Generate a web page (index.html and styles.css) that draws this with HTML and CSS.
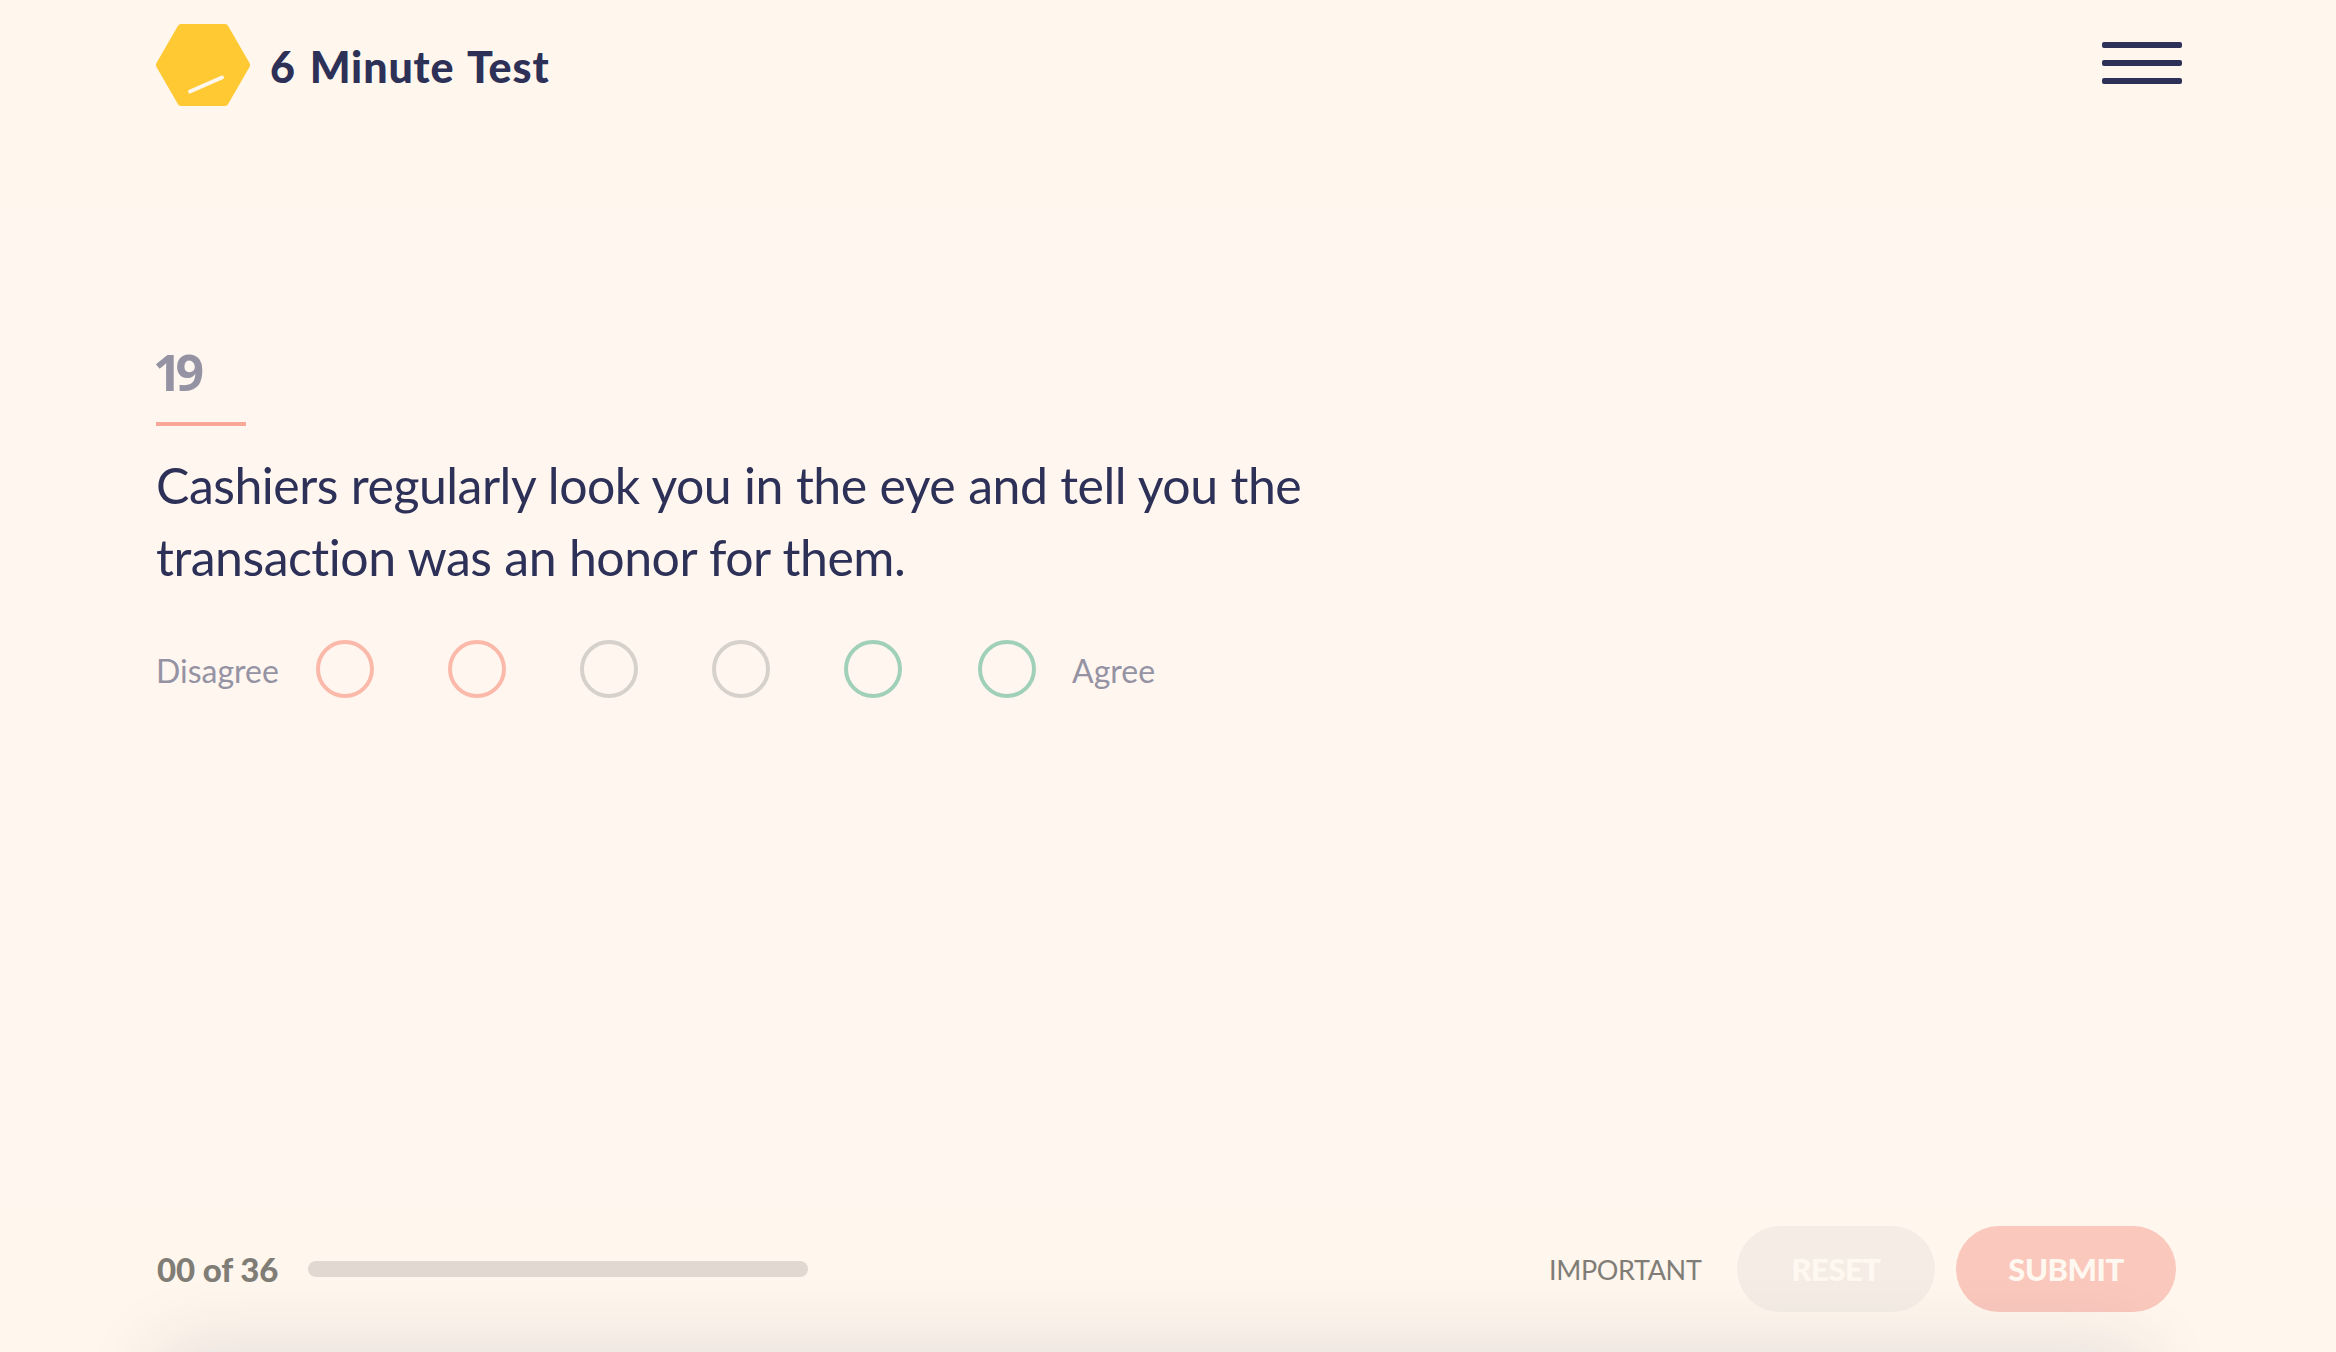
FILE: index.html
```html
<!DOCTYPE html>
<html lang="en">
<head>
  <meta charset="UTF-8">
  <meta name="viewport" content="width=device-width, initial-scale=1.0">
  <title>6 Minute Test</title>
  <link rel="stylesheet" href="styles.css">
</head>
<body>
  <div class="page">
    <header class="header">
      <a class="brand">
        <svg class="logo" viewBox="0 0 94 82" width="94" height="82">
          <path d="M25 0H69Q71 0 72 1.7L93.5 39Q94.5 41 93.5 43L72 80.300Q71 82 69 82H25Q23 82 22 80.300L.5 43Q-.5 41 .5 39L22 1.700Q23 0 25 0Z" fill="#ffc933"/>
          <path d="M34 67.500L66 53.500" stroke="#fff6ed" stroke-width="4" stroke-linecap="round"/>
        </svg>
        <span class="brand-name">6 Minute Test</span>
      </a>
      <div class="menu"><i></i><i></i><i></i></div>
    </header>
    <main class="question">
      <div class="number">19</div>
      <div class="text">Cashiers regularly look you in the eye and tell you the<br>transaction was an honor for them.</div>
      <div class="scale">
        <span class="label disagree">Disagree</span>
        <div class="options">
          <i class="option red"></i>
          <i class="option red"></i>
          <i class="option gray"></i>
          <i class="option gray"></i>
          <i class="option green"></i>
          <i class="option green last"></i>
        </div>
        <span class="label agree">Agree</span>
      </div>
    </main>
    <footer class="footer">
      <span class="count">00 of 36</span>
      <div class="progress"></div>
      <span class="important">IMPORTANT</span>
      <button class="btn reset">RESET</button>
      <button class="btn submit">SUBMIT</button>
    </footer>
    <div class="panel"></div>
  </div>
</body>
</html>
```
FILE: styles.css
```css
*{
  box-sizing: border-box;
}
body{
  margin: 0;
}
.page{
  height: 1352px;
  overflow: hidden;
  display: flex;
  flex-direction: column;
  font-family: Lato, "Liberation Sans", sans-serif;
  color: #2d3157;
  background: linear-gradient(#fff6ed 150px, #fff6f0 290px, #fff6f0 1170px, #fff6ed 1240px);
}
.header{
  height: 130px;
  flex: none;
  padding: 24px 154px 0 156px;
  display: flex;
  justify-content: space-between;
  align-items: flex-start;
}
.brand{
  display: flex;
}
.logo{
  display: block;
}
.brand-name{
  margin-left: 20px;
  padding-top: 16px;
  font-size: 43px;
  line-height: 54px;
  font-weight: 900;
  letter-spacing: .85px;
  word-spacing: 2.8px;
  white-space: nowrap;
}
.menu{
  width: 80px;
  padding-top: 18px;
  display: flex;
  flex-direction: column;
  gap: 12px;
}
.menu i{
  height: 6px;
  border-radius: 2px;
  background: #2d3157;
}
.question{
  flex: 1;
  padding: 212px 0 0 156px;
}
.number{
  width: 90px;
  height: 84px;
  border-bottom: 4px solid #f9a898;
  font-family: "Open Sans", sans-serif;
  font-size: 50px;
  line-height: 60px;
  font-weight: 700;
  letter-spacing: -6px;
  text-indent: -3px;
  color: #9593a3;
}
.text{
  margin-top: 23px;
  font-size: 50px;
  line-height: 72px;
  letter-spacing: -.5px;
  word-spacing: .6px;
  white-space: nowrap;
}
.scale{
  margin-top: 47px;
  height: 58px;
  display: flex;
}
.label{
  font-size: 32px;
  line-height: 62px;
  color: #9593a3;
  white-space: nowrap;
}
.disagree{
  width: 160px;
}
.options{
  display: flex;
  gap: 74px;
}
.option{
  width: 58px;
  height: 58px;
  border: 4px solid;
  border-radius: 50%;
}
.last{
  margin-left: 2px;
}
.red{
  border-color: #fbb9aa;
}
.gray{
  border-color: #d6d1cb;
}
.green{
  border-color: #a0d1b8;
}
.agree{
  margin-left: 36px;
}
.footer{
  flex: none;
  height: 126px;
  padding: 0 160px 40px 156px;
  display: flex;
  align-items: center;
  color: #807d77;
}
.count{
  width: 152px;
  padding-left: 1px;
  font-size: 33px;
  font-weight: 900;
  letter-spacing: -.1px;
  white-space: nowrap;
}
.progress{
  width: 500px;
  height: 16px;
  border-radius: 8px;
  background: #e1d8d1;
}
.important{
  margin-left: auto;
  width: 188px;
  font-size: 27px;
  letter-spacing: -.35px;
  white-space: nowrap;
}
.btn{
  height: 86px;
  padding: 0;
  border: 0;
  border-radius: 43px;
  font: 900 31px Lato, sans-serif;
  letter-spacing: -.5px;
  color: #fff8f1;
}
.reset{
  width: 198px;
  background: #f5ede5;
}
.submit{
  width: 220px;
  margin-left: 21px;
  background: #fac8bc;
}
/* next section, only its shadow reaches the screen */
.panel{
  flex: none;
  height: 100px;
  margin: 0 195px -100px 160px;
  box-shadow: 0 0 80px rgba(45,49,87,.14);
}
```
